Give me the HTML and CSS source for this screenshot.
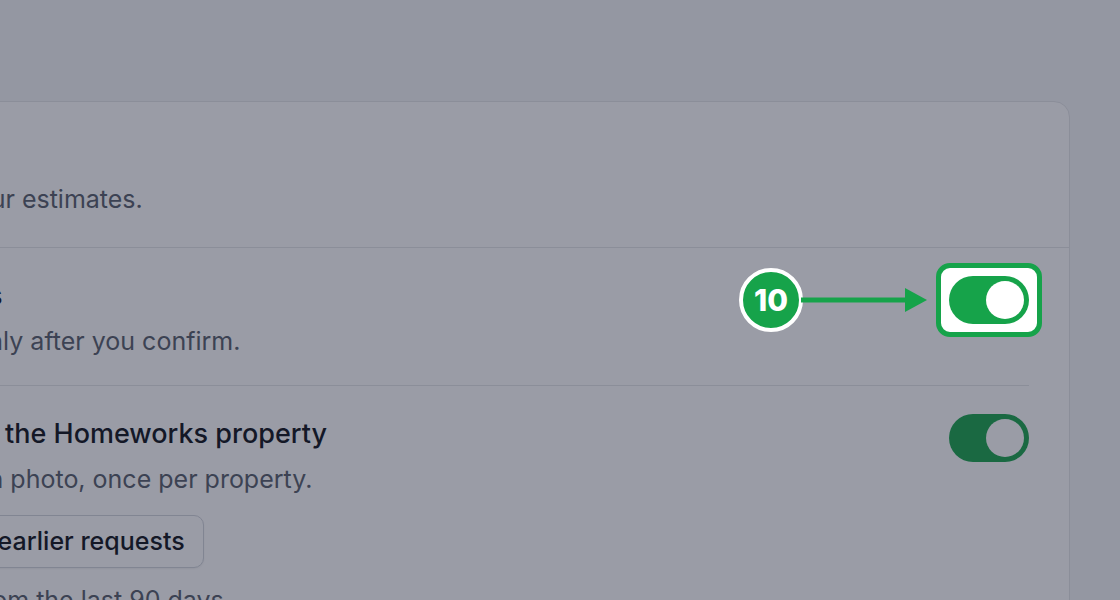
FILE: index.html
```html
<!DOCTYPE html>
<html>
  <head>
    <meta charset="UTF-8">
    <title>Estimate settings</title>
    <link rel="stylesheet" href="styles.css">
  </head>
  <body>
    <main class="page">
      <section class="card">
        <header class="card-head">
          <h2 class="card-title">Estimates</h2>
          <p class="card-desc">Choose how we send your estimates.</p>
        </header>

        <div class="setting">
          <div class="setting-text">
            <h3 class="setting-title">Prepare draft estimates</h3>
            <p class="setting-desc">Estimates go to clients only after you confirm.</p>
          </div>
          <div class="switch-spot is-focused">
            <span class="step">10</span>
            <svg class="step-arrow" width="126" height="24" viewBox="0 0 126 24">
              <rect x="0" y="9.5" width="108" height="5" fill="#16a34a"/>
              <polygon points="104,0 126,12 104,24" fill="#16a34a"/>
            </svg>
            <button class="switch on" aria-label="Prepare draft estimates"></button>
          </div>
        </div>

        <div class="setting">
          <div class="setting-text">
            <h3 class="setting-title">Reuse site photos from the Homeworks property</h3>
            <p class="setting-desc">We reuse a single kitchen photo, once per property.</p>
            <button class="btn">Apply this setting to all earlier requests</button>
            <p class="setting-hint">Covers requests made from the last 90 days.</p>
          </div>
          <div class="switch-spot">
            <button class="switch on" aria-label="Reuse site photos"></button>
          </div>
        </div>
      </section>
    </main>
    <div class="dim"></div>
  </body>
</html>
```

FILE: styles.css
```css
/* page */
* {
  box-sizing: border-box;
}

body {
  margin: 0;
  height: 600px;
  overflow: hidden;
  background: #f5f6f8;
  font-family: Inter, "Noto Sans", sans-serif;
  color: #0b0f17;
}

.page {
  padding-top: 101px;
}

/* card */
.card {
  width: 1410px;
  margin-left: -340px;
  background: #fff;
  border: 1px solid #e3e5e8;
  border-radius: 16px;
}

.card-head {
  padding: 31px 40px 32px;
  border-bottom: 1px solid #e3e5e8;
}

.card-title {
  margin: 0 0 14px;
  font-size: 28px;
  line-height: 36px;
  font-weight: 600;
}

.card-desc {
  margin: 0;
  font-size: 25px;
  line-height: 32px;
  color: #555c69;
}

/* setting rows */
.setting {
  display: flex;
  justify-content: space-between;
  align-items: flex-start;
  margin: 0 40px;
  padding: 32px 0 29px;
  border-bottom: 1px solid #e3e5e8;
}

.setting-title {
  margin: 0;
  font-size: 27px;
  line-height: 32px;
  font-weight: 500;
}

.setting-desc {
  margin: 14px 0 0;
  font-size: 25px;
  line-height: 30px;
  color: #555c69;
}

.setting-hint {
  margin: 17px 0 0;
  font-size: 25px;
  line-height: 30px;
  color: #555c69;
}

.btn {
  margin-top: 21px;
  padding: 11px 18px;
  font-family: inherit;
  font-size: 25px;
  line-height: 29px;
  font-weight: 500;
  color: #0b0f17;
  background: #fff;
  border: 1px solid #d1d5db;
  border-radius: 10px;
  box-shadow: 0 1px 2px rgba(0, 0, 0, 0.06);
}

/* switch */
.switch-spot {
  position: relative;
  margin-top: -4px;
}

.switch {
  display: block;
  width: 80px;
  height: 48px;
  padding: 5px;
  border: 0;
  border-radius: 24px;
  background: #d1d5db;
  cursor: pointer;
}

.switch::after {
  content: '';
  display: block;
  width: 38px;
  height: 38px;
  border-radius: 50%;
  background: #fff;
}

.switch.on {
  background: #16a34a;
}

.switch.on::after {
  margin-left: auto;
}

/* tour highlight */
.dim {
  position: fixed;
  inset: 0;
  background: rgba(30, 35, 57, 0.45);
  z-index: 10;
}

.is-focused {
  z-index: 20;
}

.is-focused::before {
  content: '';
  position: absolute;
  inset: -13px;
  background: #fff;
  border: 5px solid #16a34a;
  border-radius: 14px;
  z-index: -1;
}

.step {
  position: absolute;
  left: -210px;
  top: -8px;
  width: 64px;
  height: 64px;
  display: flex;
  align-items: center;
  justify-content: center;
  background: #16a34a;
  border: 4px solid #fff;
  border-radius: 50%;
  color: #fff;
  font-size: 30px;
  font-weight: 800;
}

.step-arrow {
  position: absolute;
  left: -148px;
  top: 12px;
}
```
